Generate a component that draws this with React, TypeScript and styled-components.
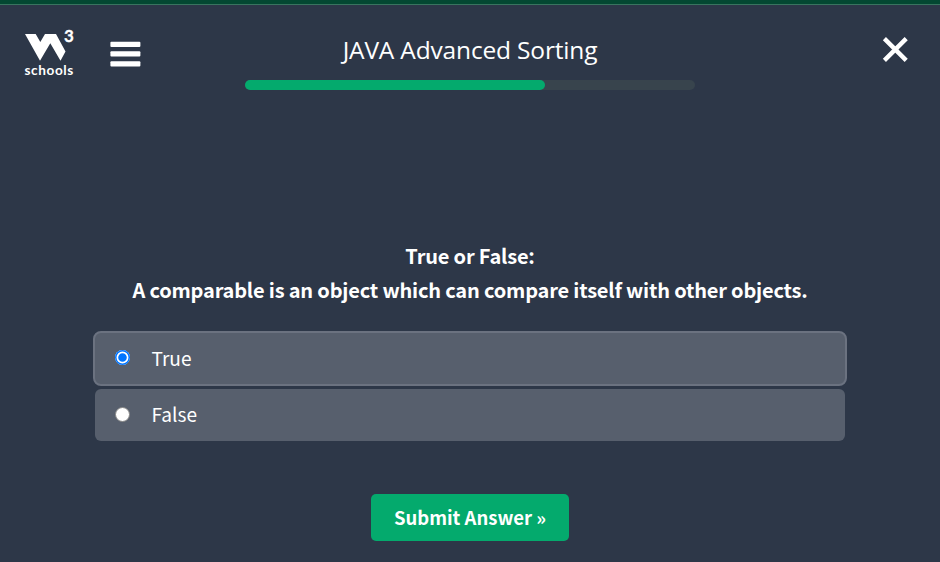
import React from "react";
import styled, { createGlobalStyle } from "styled-components";

const sans = `"Noto Sans CJK SC", "Noto Sans", sans-serif`;

const GlobalStyle = createGlobalStyle`
  * { box-sizing: border-box; }
  body { margin: 0; background: #2d3748; }
`;

const Page = styled.div`
  height: 562px;
  display: flex;
  flex-direction: column;
  overflow: hidden;
  background: #2d3748;
  color: #fff;
  font-family: ${sans};
  border-top: 4px solid #044832;
`;

const Header = styled.header`
  height: 96px;
  display: grid;
  grid-template-columns: 245px 450px 245px;
  border-top: 1px solid #39745f;
`;

const HeaderLeft = styled.div`
  display: flex;
  align-items: flex-start;
  padding: 19px 0 0 23px;
`;

const Logo = styled.svg`
  display: block;
  width: 56px;
  height: 60px;
  fill: #fff;
  font-family: Lato, sans-serif;
  font-weight: 700;
`;

const MenuButton = styled.button`
  width: 31px;
  height: 26px;
  margin: 17px 0 0 31px;
  padding: 0;
  border: 0;
  background: none;
`;

const Icon = styled.svg`
  display: block;
`;

const HeaderCenter = styled.div`
  display: flex;
  flex-direction: column;
  align-items: center;
`;

const Title = styled.h1`
  margin: 27px 0 0;
  height: 48px;
  font: 400 24.5px/36px "Open Sans", "Noto Sans", sans-serif;
  letter-spacing: -0.17px;
  white-space: nowrap;
`;

const Track = styled.div`
  width: 450px;
  height: 10px;
  border-radius: 5px;
  background: #38444d;
`;

const Fill = styled.div`
  height: 10px;
  border-radius: 5px;
  background: #04aa6d;
`;

const HeaderRight = styled.div`
  display: flex;
  justify-content: flex-end;
  align-items: flex-start;
  padding: 31px 31px 0 0;
`;

const CloseButton = styled.button`
  padding: 0;
  border: 0;
  background: none;
`;

const Main = styled.main`
  display: flex;
  flex-direction: column;
  align-items: center;
  padding-top: 139px;
`;

const Question = styled.h2`
  margin: 0;
  font-size: 20px;
  font-weight: 700;
  letter-spacing: -0.19px;
  line-height: 34px;
  text-align: center;
  white-space: nowrap;
`;

const Options = styled.div`
  display: flex;
  flex-direction: column;
  align-items: center;
  gap: 3px;
  margin-top: 24px;
`;

const Option = styled.label<{ $selected?: boolean }>`
  display: flex;
  align-items: center;
  width: ${(p) => (p.$selected ? 754 : 750)}px;
  height: ${(p) => (p.$selected ? 55 : 52)}px;
  padding: 0 0 ${(p) => (p.$selected ? 1 : 2)}px 20px;
  border: ${(p) => (p.$selected ? "2px solid #6b7280" : "0")};
  border-radius: ${(p) => (p.$selected ? 8 : 6)}px;
  background: #575f6d;
  font-size: 19.1px;
  line-height: 30px;
`;

const Radio = styled.span<{ $selected?: boolean }>`
  flex: none;
  width: 15px;
  height: 15px;
  margin: 0 21.5px ${(p) => (p.$selected ? 1 : 0)}px 0;
  border-radius: 50%;
  border: ${(p) => (p.$selected ? "0" : "1px solid #858585")};
  background: ${(p) => (p.$selected ? "#0075ff" : "#fff")};
  box-shadow: ${(p) =>
    p.$selected ? "inset 0 0 0 1.5px #0075ff, inset 0 0 0 3.2px #fff" : "none"};
`;

const Submit = styled.button`
  width: 198px;
  height: 47px;
  margin-top: 53px;
  padding: 0 0 2px;
  border: 0;
  border-radius: 5px;
  background: #04aa6d;
  color: #fff;
  font: 700 18.5px/30px ${sans};
  white-space: nowrap;
`;

const W3Logo = () => (
  <Logo viewBox="0 0 56 60" role="img" aria-label="W3 schools">
    <path d="M2 10H12.7L17.3 18L22 10H33L42.5 27.5L37.5 36.8L27.3 19.3L17 36.8Z" />
    <text x="41" y="18.3" fontSize="17" stroke="#fff" strokeWidth="0.3">3</text>
    <text x="1.5" y="50.5" fontSize="13.6" textLength="48.8">schools</text>
  </Logo>
);

const answers = [
  { text: "True", selected: true },
  { text: "False", selected: false },
];

const progress = 200 / 3;

export default function App() {
  return (
    <Page>
      <GlobalStyle />
      <Header>
        <HeaderLeft>
          <W3Logo />
          <MenuButton aria-label="Menu">
            <Icon width="31" height="26" fill="#fff">
              <rect x="0.4" y="0.8" width="30" height="5.2" rx="1" />
              <rect x="0.4" y="10.3" width="30" height="5.2" rx="1" />
              <rect x="0.4" y="20.2" width="30" height="5.2" rx="1" />
            </Icon>
          </MenuButton>
        </HeaderLeft>
        <HeaderCenter>
          <Title>JAVA Advanced Sorting</Title>
          <Track>
            <Fill style={{ width: `${progress}%` }} />
          </Track>
        </HeaderCenter>
        <HeaderRight>
          <CloseButton aria-label="Close">
            <Icon width="28" height="28" stroke="#fff" strokeWidth="4.4">
              <path d="M3.4 2.6L25.2 24.4M25.2 2.6L3.4 24.4" />
            </Icon>
          </CloseButton>
        </HeaderRight>
      </Header>
      <Main>
        <Question>
          True or False:
          <br />
          A comparable is an object which can compare itself with other objects.
        </Question>
        <Options role="radiogroup">
          {answers.map((a) => (
            <Option key={a.text} $selected={a.selected}>
              <Radio role="radio" aria-checked={a.selected} $selected={a.selected} />
              {a.text}
            </Option>
          ))}
        </Options>
        <Submit>Submit Answer »</Submit>
      </Main>
    </Page>
  );
}
